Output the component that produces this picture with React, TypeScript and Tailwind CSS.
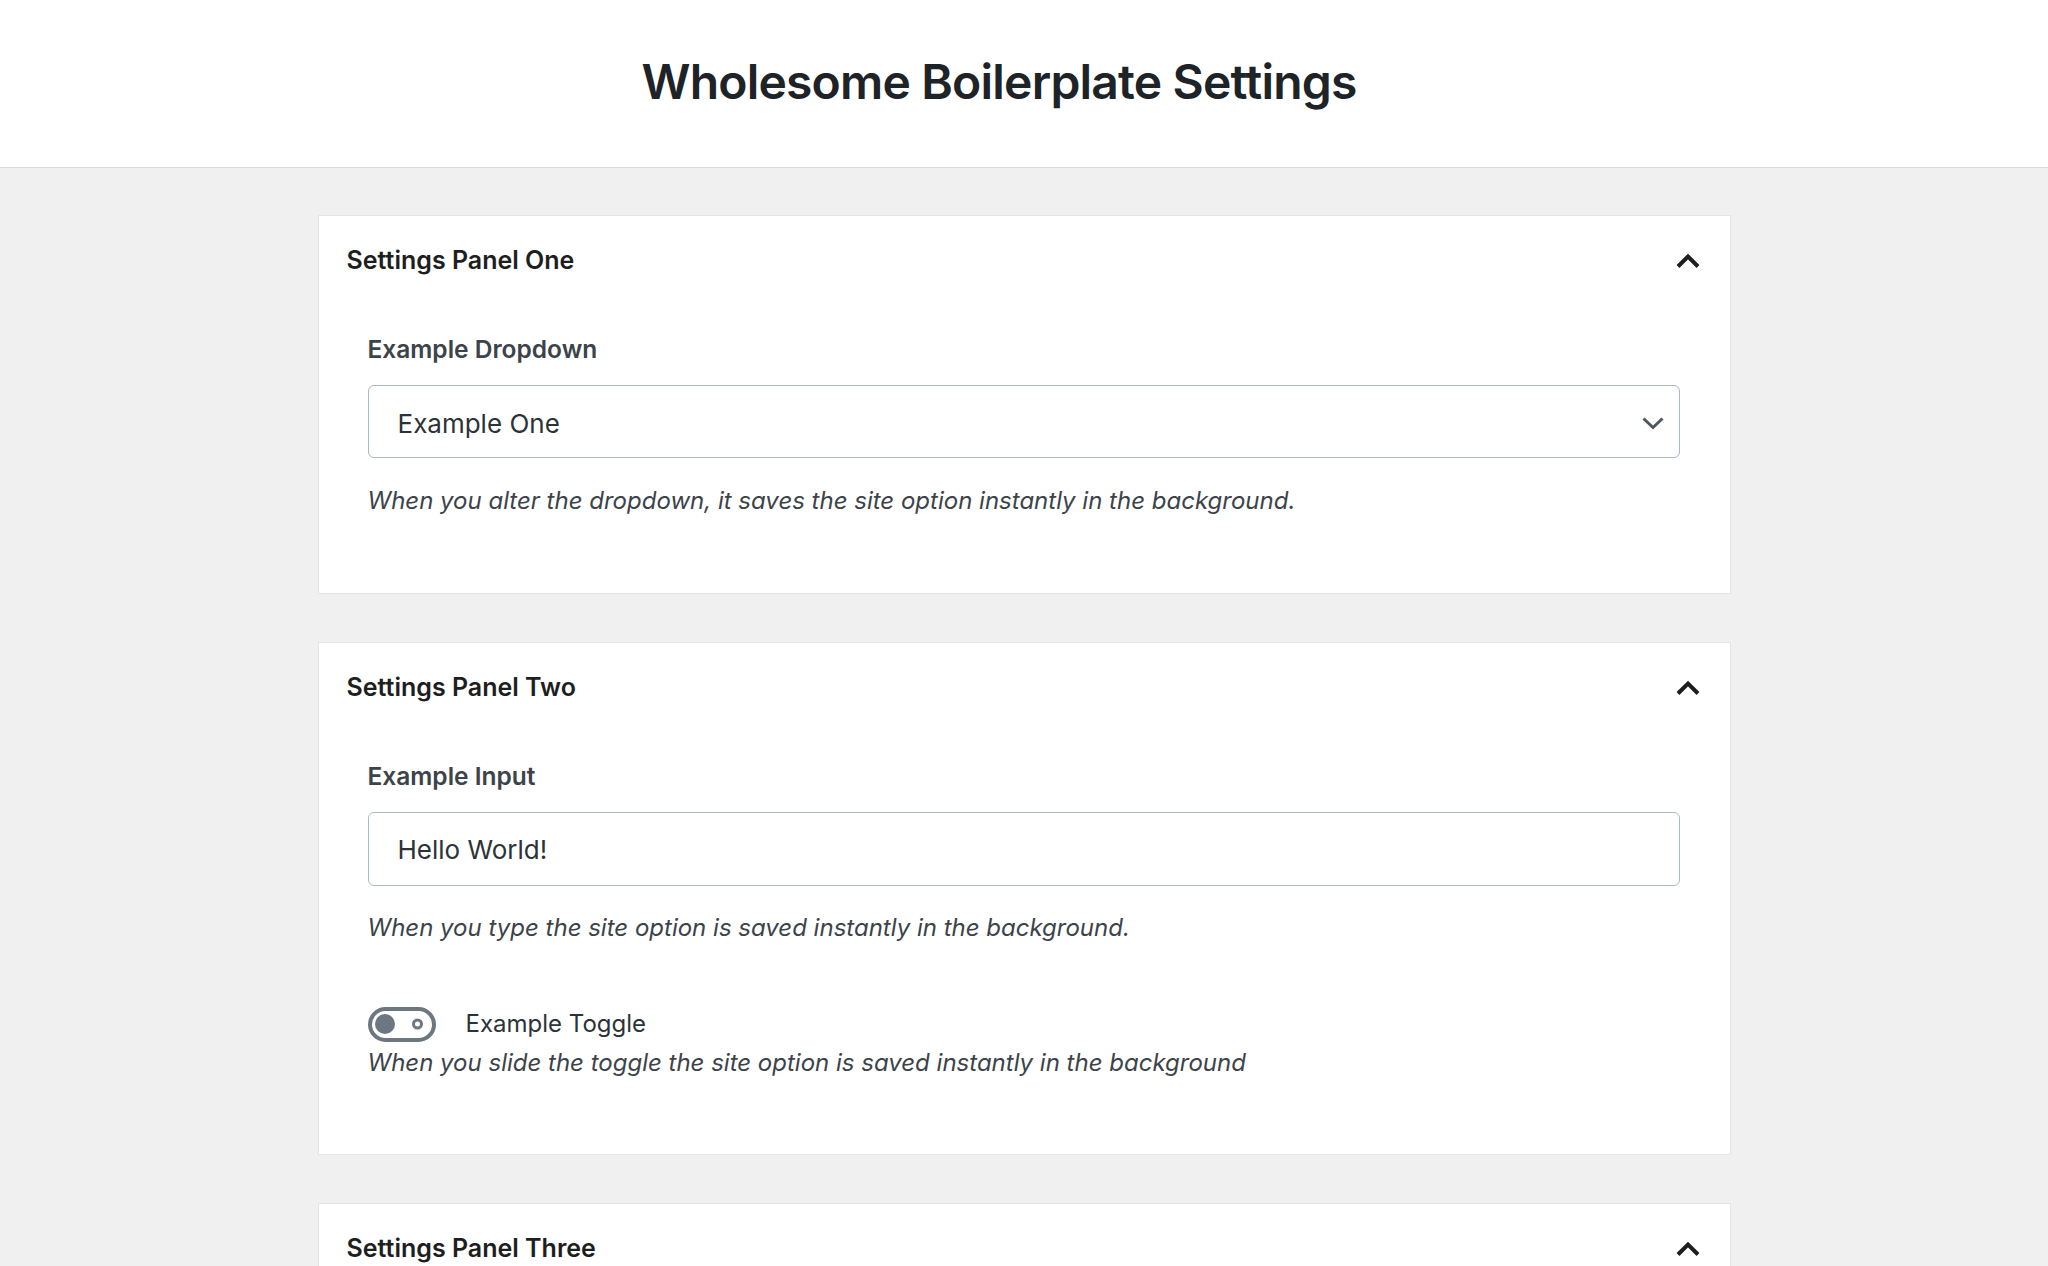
import React from "react";

function ChevronUp() {
  return (
    <svg width="26" height="16" viewBox="0 0 26 16" fill="none">
      <path d="M3 13.5 L13 3.5 L23 13.5" stroke="#1e1e1e" strokeWidth="4" />
    </svg>
  );
}

function ChevronDown() {
  return (
    <svg width="22" height="13" viewBox="0 0 22 13" fill="none">
      <path d="M1.5 1.5 L11 10.5 L20.5 1.5" stroke="#50575e" strokeWidth="3" />
    </svg>
  );
}

function Toggle() {
  return (
    <div className="relative w-[68px] h-[35px] rounded-full border-[4px] border-[#6c7781] shrink-0">
      <div className="absolute left-[3px] top-1/2 -translate-y-1/2 w-[20px] h-[20px] rounded-full bg-[#6c7781]" />
      <div className="absolute right-[9px] top-1/2 -translate-y-1/2 w-[11px] h-[11px] rounded-full border-[3px] border-[#6c7781]" />
    </div>
  );
}

function Panel({ title, children }: { title: string; children?: React.ReactNode }) {
  return (
    <section className="bg-white border border-[#e2e4e7]">
      <div className="h-[90px] flex items-center justify-between pl-[28px] pr-[29px]">
        <h2 className="text-[25px] font-semibold text-[#1e1e1e]">{title}</h2>
        <ChevronUp />
      </div>
      {children}
    </section>
  );
}

export default function App() {
  return (
    <div
      className="min-h-screen bg-[#f0f0f1]"
      style={{ fontFamily: "Inter, 'Noto Sans', sans-serif" }}
    >
      <header className="h-[168px] bg-white border-b border-[#dcdcde] flex items-center justify-center">
        <h1 className="text-[48px] leading-none font-semibold text-[#1d2327] mr-[50px] mb-[4px] tracking-[-0.8px]">
          Wholesome Boilerplate Settings
        </h1>
      </header>

      <main className="w-[1413px] mx-auto pt-[47px] flex flex-col gap-[48px]">
        <Panel title="Settings Panel One">
          <div className="pl-[49px] pr-[50px] pt-[27px] pb-[75px]">
            <div className="text-[24.5px] leading-[32px] font-semibold text-[#3c434a]">
              Example Dropdown
            </div>
            <div className="mt-[20px] h-[73px] border border-[#aab8c6] rounded-[6px] flex items-center justify-between pl-[29px] pr-[15px] pt-[3px]">
              <span className="text-[26px] text-[#2c3338]">Example One</span>
              <ChevronDown />
            </div>
            <p className="mt-[26px] text-[24px] leading-[34px] italic text-[#3c434a]">
              When you alter the dropdown, it saves the site option instantly in the background.
            </p>
          </div>
        </Panel>

        <Panel title="Settings Panel Two">
          <div className="pl-[49px] pr-[50px] pt-[27px] pb-[74px]">
            <div className="text-[24.5px] leading-[32px] font-semibold text-[#3c434a]">
              Example Input
            </div>
            <div className="mt-[20px] h-[74px] border border-[#aab8c6] rounded-[6px] flex items-center pl-[29px]">
              <span className="text-[26px] text-[#2c3338]">Hello World!</span>
            </div>
            <p className="mt-[25px] text-[24px] leading-[34px] italic text-[#3c434a]">
              When you type the site option is saved instantly in the background.
            </p>
            <div className="mt-[61px] flex items-center gap-[30px]">
              <Toggle />
              <span className="text-[24px] text-[#2c3338]">Example Toggle</span>
            </div>
            <p className="mt-[4px] text-[24px] leading-[34px] italic text-[#3c434a]">
              When you slide the toggle the site option is saved instantly in the background
            </p>
          </div>
        </Panel>

        <Panel title="Settings Panel Three">
          <div className="h-[200px]" />
        </Panel>
      </main>
    </div>
  );
}
